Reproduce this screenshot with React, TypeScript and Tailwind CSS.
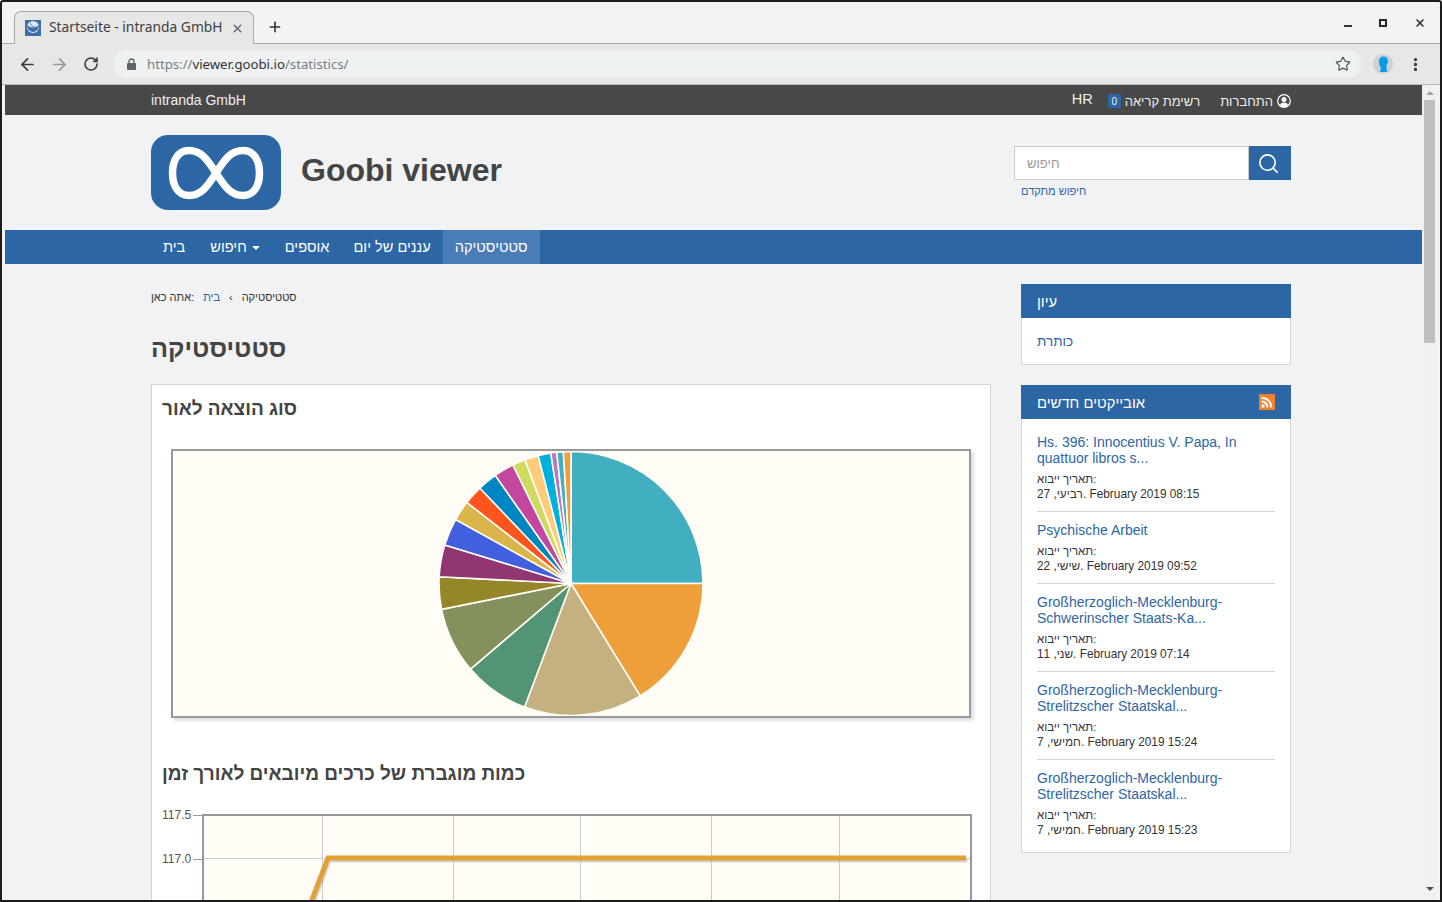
import { ArrowLeft, ArrowRight, RotateCw, Star, X, Plus, Search, EllipsisVertical } from "lucide-react";

const slices = [
  { end: 90, color: "#42afc1" },
  { end: 148.4, color: "#ee9f3a" },
  { end: 200.6, color: "#c5b17f" },
  { end: 229.6, color: "#529475" },
  { end: 258.7, color: "#85915c" },
  { end: 272.9, color: "#948629" },
  { end: 287, color: "#913672" },
  { end: 299, color: "#425fdd" },
  { end: 307.9, color: "#dab54c" },
  { end: 316.3, color: "#ff541e" },
  { end: 325, color: "#0085c3" },
  { end: 333.9, color: "#c4479f" },
  { end: 339.6, color: "#cedb5e" },
  { end: 345.6, color: "#ffcc7a" },
  { end: 351.2, color: "#00b1e0" },
  { end: 353.8, color: "#b876c8" },
  { end: 356.7, color: "#42afc1" },
  { end: 360, color: "#ee9f3a" },
];

const news = [
  { title: "Hs. 396: Innocentius V. Papa, In quattuor libros s...", date: "27 ,רביעי. February 2019 08:15" },
  { title: "Psychische Arbeit", date: "22 ,שישי. February 2019 09:52" },
  { title: "Großherzoglich-Mecklenburg-Schwerinscher Staats-Ka...", date: "11 ,שני. February 2019 07:14" },
  { title: "Großherzoglich-Mecklenburg-Strelitzscher Staatskal...", date: "7 ,חמישי. February 2019 15:24" },
  { title: "Großherzoglich-Mecklenburg-Strelitzscher Staatskal...", date: "7 ,חמישי. February 2019 15:23" },
];

function Pie() {
  const cx = 398;
  const cy = 132.5;
  const r = 132;
  let start = 0;
  return (
    <svg width="796" height="265" className="block">
      {slices.map((s) => {
        const a0 = (start * Math.PI) / 180;
        const a1 = (s.end * Math.PI) / 180;
        const large = s.end - start > 180 ? 1 : 0;
        const d = `M${cx} ${cy}L${cx + r * Math.sin(a0)} ${cy - r * Math.cos(a0)}A${r} ${r} 0 ${large} 1 ${cx + r * Math.sin(a1)} ${cy - r * Math.cos(a1)}Z`;
        start = s.end;
        return <path key={s.end} d={d} fill={s.color} stroke="#fffdf6" strokeWidth={1.6} />;
      })}
    </svg>
  );
}

function LineChart() {
  return (
    <div className="flex mt-[29px] ml-[10px] h-[120px]">
      <div className="w-[40px] shrink-0 text-[12px] text-[#555] leading-none">
        <div className="flex items-center h-[12px] -mt-[5px]">
          <span className="w-[29px] text-right">117.5</span>
          <span className="ml-[2px] w-[9px] h-px bg-[#999]" />
        </div>
        <div className="flex items-center h-[12px] mt-[32px]">
          <span className="w-[29px] text-right">117.0</span>
          <span className="ml-[2px] w-[9px] h-px bg-[#999]" />
        </div>
      </div>
      <div className="flex-1 mr-[19px]">
        <svg width="770" height="120" className="block">
          <rect x="0" y="0" width="770" height="120" fill="#fffdf6" />
          {[120, 251, 378, 509, 637].map((x) => (
            <line key={x} x1={x + 0.5} y1="0" x2={x + 0.5} y2="120" stroke="#cccccc" />
          ))}
          <line x1="0" y1="44.5" x2="770" y2="44.5" stroke="#cccccc" />
          <polyline points="106,96 126,44 764,44" fill="none" stroke="#777" strokeOpacity="0.3" strokeWidth="4" transform="translate(1.5 2.5)" />
          <polyline points="106,96 126,44 764,44" fill="none" stroke="#e0a136" strokeWidth="5" />
          <line x1="1" y1="0" x2="1" y2="120" stroke="#999" strokeWidth="2" />
          <line x1="0" y1="1" x2="770" y2="1" stroke="#999" strokeWidth="2" />
          <line x1="769" y1="0" x2="769" y2="120" stroke="#999" strokeWidth="2" />
        </svg>
      </div>
    </div>
  );
}

export default function App() {
  return (
    <div className="w-[1442px] h-[902px] overflow-hidden bg-[#f3f3f3] border-2 border-[#1c1c1c] rounded-t-[3px] flex flex-col font-['Liberation_Sans',sans-serif]">
      {/* tab strip */}
      <div className="h-[42px] flex items-end shrink-0 font-['Noto_Sans',sans-serif] border-b border-[#aaa9a6] relative">
        <div className="ml-[12px] w-[240px] h-[33px] -mb-px bg-[#e7e7e5] border border-b-0 border-[#aaa9a6] rounded-t-[7px] flex items-center pl-[10px] pr-[9px]">
          <svg width="16" height="16" viewBox="0 0 16 16" className="shrink-0">
            <rect width="16" height="16" fill="#3f6fa8" />
            <circle cx="8" cy="7" r="6" fill="#dfe8f2" />
            <path d="M2 5a6 7 0 0 0 12 0a7 5 0 0 1-12 0Z" fill="#3f6fa8" />
            <path d="M5 1a5 5 0 0 0 6 6a6 6 0 0 1-6-6Z" fill="#3f6fa8" />
          </svg>
          <span className="ml-[8px] -mt-[2px] text-[13.8px] text-[#3c4043] whitespace-nowrap leading-none">Startseite - intranda GmbH</span>
          <X className="ml-auto text-[#5f6368]" size={13} strokeWidth={2.6} />
        </div>
        <Plus className="ml-[13px] mb-[8px] text-[#333]" size={16} strokeWidth={2.4} />
        <div className="ml-auto mr-[16px] flex items-start self-start mt-[17px] gap-[27px]">
          <span className="w-[8px] h-[2px] bg-[#333] mt-[6px]" />
          <span className="w-[8px] h-[8px] border-2 border-[#222]" />
          <X size={12} strokeWidth={3.2} className="text-[#333] -mt-[2px] -mr-[2px]" />
        </div>
      </div>
      {/* toolbar */}
      <div className="h-[41px] shrink-0 bg-[#e7e7e5] flex items-center pl-[16px] pr-[15px] border-b border-[#b9b9b7] font-['Noto_Sans',sans-serif]">
        <ArrowLeft size={19} strokeWidth={2.2} className="text-[#3c3c3c]" />
        <ArrowRight size={19} strokeWidth={2.2} className="ml-[13px] text-[#999]" />
        <RotateCw size={16} strokeWidth={2.4} className="ml-[14px] text-[#3c3c3c]" />
        <div className="ml-[14px] w-[1248px] h-[28px] rounded-full bg-[#eff2f3] flex items-center pl-[13px] pr-[10px]">
          <svg width="11" height="12" viewBox="0 0 11 12" className="shrink-0">
            <rect x="1" y="5" width="9" height="7" rx="1" fill="#5f6368" />
            <path d="M3 5V3.500a2.500 2.500 0 0 1 5 0V5" fill="none" stroke="#5f6368" strokeWidth="1.4" />
          </svg>
          <span className="ml-[10px] mt-[2px] text-[13.2px] leading-none text-[#7a7d80]">
            https://<span className="text-[#2f3134]">viewer.goobi.io</span>/statistics/
          </span>
          <Star size={16} strokeWidth={1.8} className="ml-auto text-[#555]" />
        </div>
        <div className="ml-[12px] w-[20px] h-[20px] rounded-full bg-[#cfd1d1] flex items-center justify-center">
          <svg width="12" height="18" viewBox="0 0 12 18">
            <path d="M2 6a4.500 4.500 0 0 1 9 0c0 2-1 3-1.500 4v4l1 3H3l1-4c-1-1-2-4-2-7Z" fill="#0a9be6" />
          </svg>
        </div>
        <EllipsisVertical size={17} strokeWidth={2.6} className="ml-[14px] text-[#333]" />
      </div>
      {/* viewport */}
      <div className="flex-1 min-h-0 flex pl-[3px] pr-[3px] bg-[#f3f3f3]">
        <div className="w-[1417px] bg-[#f1f2f4] overflow-hidden shrink-0">
          <div className="h-[30px] bg-[#484848] text-white">
            <div className="w-[1140px] ml-[146px] h-full flex items-center text-[14px] text-[#eee]">
              <span>intranda GmbH</span>
              <div className="ml-auto flex items-center">
                <span className="text-[14.5px] mr-[15px]">HR</span>
                <span className="w-[13px] h-[14px] bg-[#2c66a5] rounded-[2px] text-[10px] flex items-center justify-center mt-[2px]">0</span>
                <span className="ml-[4px] text-[13px] mt-[3px]">רשימת קריאה</span>
                <span className="ml-[20px] text-[13px] mt-[3px]">התחברות</span>
                <svg width="14" height="14" viewBox="0 0 14 14" className="ml-[4px] mt-[1px]">
                  <circle cx="7" cy="7" r="6.300" fill="none" stroke="#fff" strokeWidth="1.200" />
                  <circle cx="7" cy="5.500" r="2.500" fill="#fff" />
                  <path d="M2.800 11.300C3.500 9.300 5 8.600 7 8.600s3.500 .7 4.200 2.700A6 6 0 0 1 2.800 11.300Z" fill="#fff" />
                </svg>
              </div>
            </div>
          </div>
          {/* header */}
          <div className="w-[1140px] ml-[146px] h-[115px] flex relative">
            <svg width="130" height="75" viewBox="0 0 130 75" className="mt-[20px] shrink-0">
              <rect width="130" height="75" rx="17" fill="#2c66a5" />
              <path
                d="M65 38C56 24 50 15.500 38 15.500C26 15.500 21.500 27 21.500 38C21.500 49 26 60.500 38 60.500C50 60.500 56 52 65 38C74 24 80 15.500 92 15.500C104 15.500 108.500 27 108.500 38C108.500 49 104 60.500 92 60.500C80 60.500 74 52 65 38Z"
                fill="none"
                stroke="#fff"
                strokeWidth="7.5"
              />
            </svg>
            <div className="ml-[20px] mt-[35px] text-[32px] leading-[40px] font-bold text-[#444]">Goobi viewer</div>
            <div className="ml-auto mt-[31px] w-[277px]">
              <div className="flex h-[34px]">
                <div className="flex-1 bg-white border border-[#ccc] text-[13px] text-[#999] pl-[12px] pt-[2px] flex items-center">חיפוש</div>
                <div className="w-[42px] bg-[#2c66a5] flex items-center justify-center pr-[3px]">
                  <Search size={23} strokeWidth={1.7} className="text-white" />
                </div>
              </div>
              <div className="mt-[4px] ml-[7px] text-[11px] leading-[14px] text-[#2c66a5]">חיפוש מתקדם</div>
            </div>
          </div>
          {/* nav */}
          <div className="h-[34px] bg-[#2c66a5] text-white text-[14.6px]">
            <div className="w-[1140px] ml-[146px] h-full flex items-center">
              <span className="px-[12px] pt-[2px]">בית</span>
              <span className="pl-[13px] pr-[12px] pt-[2px] flex items-center">
                חיפוש
                <span className="ml-[5px] border-x-[4px] border-x-transparent border-t-[4px] border-t-white" />
              </span>
              <span className="pl-[13px] pr-[12px] pt-[2px]">אוספים</span>
              <span className="px-[12px] pt-[2px]">עננים של יום</span>
              <span className="px-[12px] pt-[2px] h-full flex items-center bg-[#4a7cb8]">סטטיסטיקה</span>
            </div>
          </div>
          {/* content */}
          <div className="w-[1140px] ml-[146px] flex gap-[30px] items-start">
            <div className="w-[840px] shrink-0">
              <div className="mt-[27px] h-[13px] flex items-center text-[11px] text-[#333]">
                <span>אתה כאן:</span>
                <span className="ml-[9px] text-[#2c66a5]">בית</span>
                <span className="mx-[9px]">‹</span>
                <span>סטטיסטיקה</span>
              </div>
              <h1 className="mt-[27px] text-[25.2px] leading-[34px] font-bold text-[#444]">סטטיסטיקה</h1>
              <div className="mt-[19px] bg-white border border-[#d5d5d5] h-[600px]">
                <h2 className="mt-[13px] ml-[10px] text-[19px] leading-[22px] font-bold text-[#444]">סוג הוצאה לאור</h2>
                <div className="mt-[29px] ml-[19px] w-[800px] h-[269px] border-2 border-[#999] bg-[#fffdf6] shadow-[3px_3px_3px_rgba(0,0,0,0.12)]">
                  <Pie />
                </div>
                <h2 className="mt-[45px] ml-[10px] text-[19px] leading-[22px] font-bold text-[#444]">כמות מוגברת של כרכים מיובאים לאורך זמן</h2>
                <LineChart />
              </div>
            </div>
            <div className="w-[270px] shrink-0 mt-[20px]">
              <div className="h-[34px] bg-[#2c66a5] text-white text-[14.8px] flex items-center pl-[16px] pt-[2px]">עיון</div>
              <div className="h-[47px] bg-white border border-t-0 border-[#d5d5d5] pl-[15px] pt-[3px] flex items-center text-[13.5px] text-[#2c66a5]">כותרת</div>
              <div className="mt-[20px] h-[34px] bg-[#2c66a5] text-white text-[14.8px] flex items-center pl-[16px] pr-[16px]">
                <span className="pt-[2px]">אובייקטים חדשים</span>
                <svg width="16" height="16" viewBox="0 0 16 16" className="ml-auto">
                  <rect width="16" height="16" fill="#f5822a" />
                  <circle cx="4" cy="12" r="1.700" fill="#fff" />
                  <path d="M2.500 7.500a6 6 0 0 1 6 6M2.500 3.700a9.800 9.800 0 0 1 9.800 9.800" fill="none" stroke="#fff" strokeWidth="2" />
                </svg>
              </div>
              <div className="bg-white border border-t-0 border-[#d5d5d5] px-[15px] pt-[13px]">
                {news.map((n, i) => (
                  <div key={i} className={i < news.length - 1 ? "border-b border-[#d5d5d5] pb-[9px] mb-[10px]" : "pb-[14px]"}>
                    <div className="text-[14px] leading-[16px] text-[#2c66a5] mt-[2px]">{n.title}</div>
                    <div className="mt-[6px] text-[11.5px] leading-[15px] text-[#333]">
                      <div>תאריך ייבוא:</div>
                      <div className="text-[11.85px]">{n.date}</div>
                    </div>
                  </div>
                ))}
              </div>
            </div>
          </div>
        </div>
        {/* scrollbar */}
        <div className="w-[15px] shrink-0 bg-[#f1f1f1] flex flex-col items-center">
          <span className="mt-[6px] border-x-[4px] border-x-transparent border-b-[4px] border-b-[#a3a3a3]" />
          <div className="mt-[5px] w-[11px] h-[243px] bg-[#bfbfbf]" />
          <span className="mt-auto mb-[9px] border-x-[4px] border-x-transparent border-t-[4px] border-t-[#505050]" />
        </div>
      </div>
    </div>
  );
}
